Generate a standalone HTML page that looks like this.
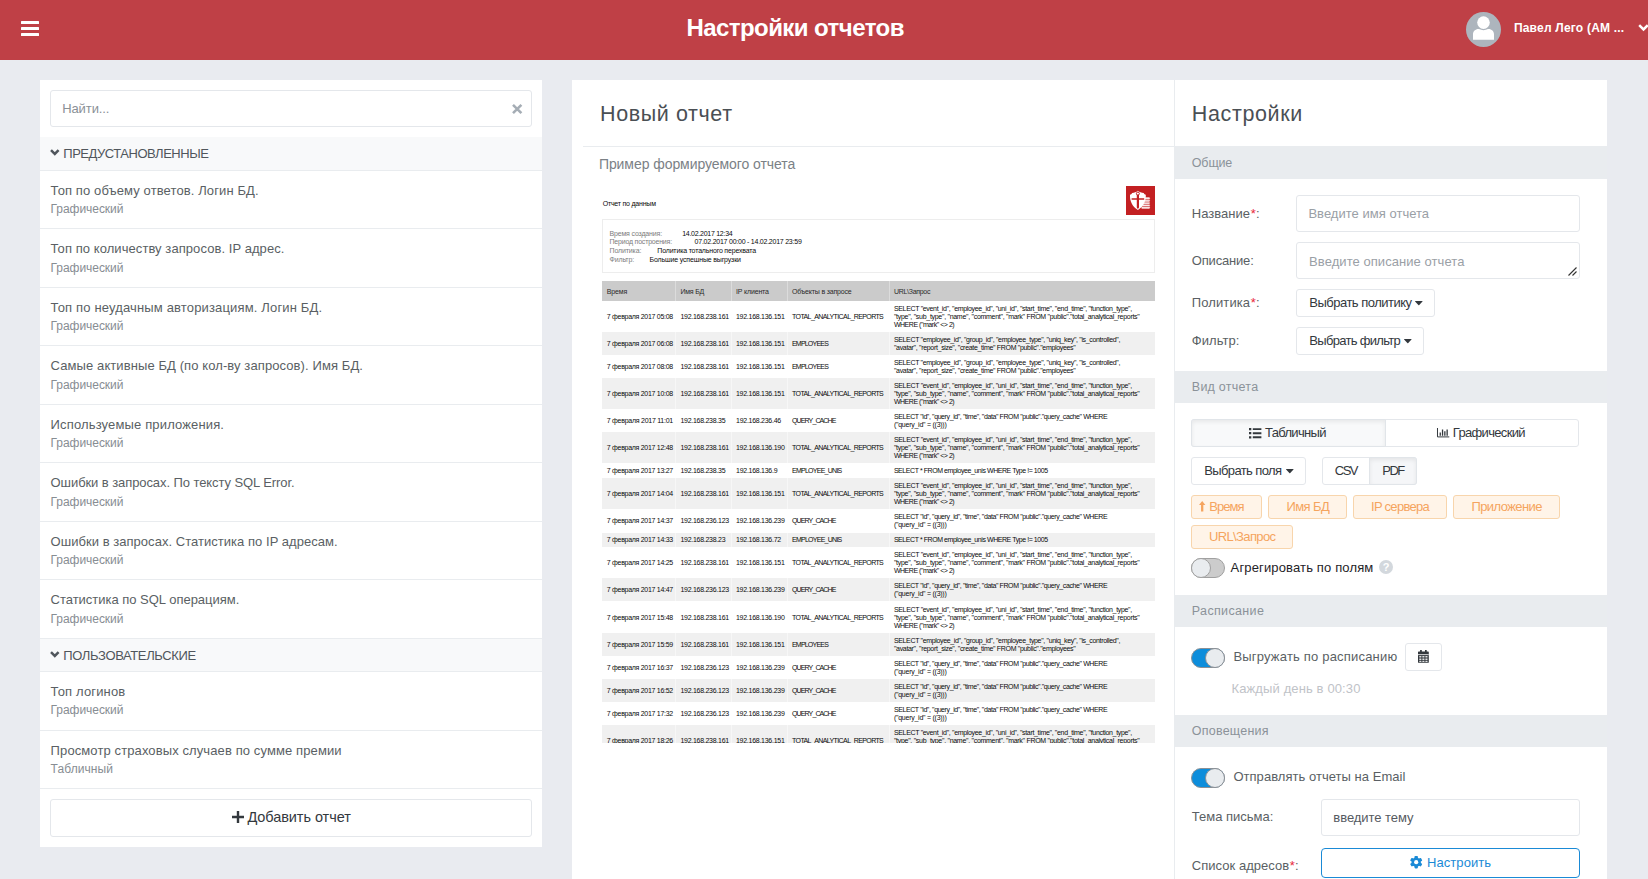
<!DOCTYPE html>
<html lang="ru"><head><meta charset="utf-8"><title>Настройки отчетов</title>
<style>
html,body{margin:0;padding:0}
body{width:1648px;height:879px;overflow:hidden;background:#e9ebf0;position:relative;font-family:"Liberation Sans", sans-serif;}
.t{position:absolute;white-space:nowrap;display:block}
.r{position:absolute;box-sizing:border-box}
svg{position:absolute;overflow:visible}

.hd{position:absolute;left:0;top:0;width:1648px;height:60px;background:#bf4046}
.card{position:absolute;background:#fff}
.inp{position:absolute;box-sizing:border-box;background:#fff;border:1px solid #e4e7eb;border-radius:3px}
.tag{position:absolute;box-sizing:border-box;background:#fff4e8;border:1px solid #f8d5ac;border-radius:3px}

</style></head>
<body>
<div class="hd"></div>
<div class="r" style="left:21.00px;top:21.00px;width:18.00px;height:3.00px;background:#fff;border-radius:0.5px;"></div>
<div class="r" style="left:21.00px;top:27.00px;width:18.00px;height:3.00px;background:#fff;border-radius:0.5px;"></div>
<div class="r" style="left:21.00px;top:33.00px;width:18.00px;height:3.00px;background:#fff;border-radius:0.5px;"></div>
<span class="t" style="left:686.40px;top:11.02px;font-size:24px;line-height:34px;color:#fff;font-weight:700;letter-spacing:-0.558px;">Настройки отчетов</span>
<svg style="left:1466px;top:12px" width="35" height="35" viewBox="0 0 35 35"><circle cx="17.5" cy="17.5" r="17.5" fill="#adb5bd"/><circle cx="17.5" cy="10.6" r="6.3" fill="#fff"/><path d="M7 27.8v-5.3c0-3 2.4-5.4 5.4-5.4h.6c1.4.7 2.9 1.1 4.5 1.1s3.100-.4 4.500-1.100h.6c3 0 5.400 2.400 5.400 5.400v5.300z" fill="#fff"/></svg>
<span class="t" style="left:1513.90px;top:20.01px;font-size:12px;line-height:17px;color:#fff;font-weight:700;letter-spacing:0.209px;">Павел Лего (АМ ...</span>
<svg style="left:1638.3px;top:23.600px" width="11" height="7" viewBox="0 0 11 7"><path d="M1.200 1.200l4.300 4.200 4.300-4.200" fill="none" stroke="#fff" stroke-width="2.500"/></svg>
<div class="card" style="left:40px;top:80px;width:502px;height:767px"></div>
<div class="inp" style="left:50px;top:90px;width:482px;height:37px"></div>
<span class="t" style="left:62.20px;top:100.00px;font-size:13px;line-height:18px;color:#8a9096;letter-spacing:-0.091px;">Найти...</span>
<svg style="left:511.6px;top:103.900px" width="10.4" height="10" viewBox="0 0 10.400 10"><path d="M1 0.900l8.400 8.200M9.400 0.900l-8.400 8.200" stroke="#a5adb5" stroke-width="2.600" fill="none"/></svg>
<div class="r" style="left:40.00px;top:137.00px;width:502.00px;height:33.10px;background:#f8f9fa;"></div>
<div class="r" style="left:40.00px;top:169.60px;width:502.00px;height:1.00px;background:#e9ecef;"></div>
<svg style="left:49.800px;top:149.0px" width="9.6" height="7.2" viewBox="0 0 9.600 7.200"><path d="M1 1.200l3.800 3.800 3.800-3.800" fill="none" stroke="#50565c" stroke-width="2.5"/></svg>
<span class="t" style="left:63.30px;top:145.00px;font-size:13px;line-height:18px;color:#50565c;letter-spacing:-0.476px;">ПРЕДУСТАНОВЛЕННЫЕ</span>
<span class="t" style="left:50.60px;top:182.00px;font-size:13px;line-height:18px;color:#5a5f64;letter-spacing:0.109px;">Топ по объему ответов. Логин БД.</span>
<span class="t" style="left:50.60px;top:201.00px;font-size:12px;line-height:17px;color:#878d93;letter-spacing:-0.054px;">Графический</span>
<div class="r" style="left:40.00px;top:228.15px;width:502.00px;height:1.00px;background:#e9ecef;"></div>
<span class="t" style="left:50.60px;top:240.00px;font-size:13px;line-height:18px;color:#5a5f64;letter-spacing:0.071px;">Топ по количеству запросов. IP адрес.</span>
<span class="t" style="left:50.60px;top:260.01px;font-size:12px;line-height:17px;color:#878d93;letter-spacing:-0.054px;">Графический</span>
<div class="r" style="left:40.00px;top:286.70px;width:502.00px;height:1.00px;background:#e9ecef;"></div>
<span class="t" style="left:50.60px;top:299.00px;font-size:13px;line-height:18px;color:#5a5f64;letter-spacing:0.157px;">Топ по неудачным авторизациям. Логин БД.</span>
<span class="t" style="left:50.60px;top:318.01px;font-size:12px;line-height:17px;color:#878d93;letter-spacing:-0.054px;">Графический</span>
<div class="r" style="left:40.00px;top:345.25px;width:502.00px;height:1.00px;background:#e9ecef;"></div>
<span class="t" style="left:50.60px;top:357.01px;font-size:13px;line-height:18px;color:#5a5f64;letter-spacing:0.095px;">Самые активные БД (по кол-ву запросов). Имя БД.</span>
<span class="t" style="left:50.60px;top:377.01px;font-size:12px;line-height:17px;color:#878d93;letter-spacing:-0.054px;">Графический</span>
<div class="r" style="left:40.00px;top:403.80px;width:502.00px;height:1.00px;background:#e9ecef;"></div>
<span class="t" style="left:50.60px;top:416.00px;font-size:13px;line-height:18px;color:#5a5f64;letter-spacing:0.144px;">Используемые приложения.</span>
<span class="t" style="left:50.60px;top:435.02px;font-size:12px;line-height:17px;color:#878d93;letter-spacing:-0.054px;">Графический</span>
<div class="r" style="left:40.00px;top:462.35px;width:502.00px;height:1.00px;background:#e9ecef;"></div>
<span class="t" style="left:50.60px;top:474.00px;font-size:13px;line-height:18px;color:#5a5f64;letter-spacing:-0.083px;">Ошибки в запросах. По тексту SQL Error.</span>
<span class="t" style="left:50.60px;top:494.00px;font-size:12px;line-height:17px;color:#878d93;letter-spacing:-0.054px;">Графический</span>
<div class="r" style="left:40.00px;top:520.90px;width:502.00px;height:1.00px;background:#e9ecef;"></div>
<span class="t" style="left:50.60px;top:533.00px;font-size:13px;line-height:18px;color:#5a5f64;letter-spacing:0.036px;">Ошибки в запросах. Статистика по IP адресам.</span>
<span class="t" style="left:50.60px;top:552.01px;font-size:12px;line-height:17px;color:#878d93;letter-spacing:-0.054px;">Графический</span>
<div class="r" style="left:40.00px;top:579.45px;width:502.00px;height:1.00px;background:#e9ecef;"></div>
<span class="t" style="left:50.60px;top:591.00px;font-size:13px;line-height:18px;color:#5a5f64;letter-spacing:-0.017px;">Статистика по SQL операциям.</span>
<span class="t" style="left:50.60px;top:611.01px;font-size:12px;line-height:17px;color:#878d93;letter-spacing:-0.054px;">Графический</span>
<div class="r" style="left:40.00px;top:638.00px;width:502.00px;height:1.00px;background:#e9ecef;"></div>
<div class="r" style="left:40.00px;top:639.00px;width:502.00px;height:32.60px;background:#f8f9fa;"></div>
<div class="r" style="left:40.00px;top:671.10px;width:502.00px;height:1.00px;background:#e9ecef;"></div>
<svg style="left:49.800px;top:650.8px" width="9.6" height="7.2" viewBox="0 0 9.600 7.200"><path d="M1 1.200l3.800 3.800 3.800-3.800" fill="none" stroke="#50565c" stroke-width="2.5"/></svg>
<span class="t" style="left:63.30px;top:647.01px;font-size:13px;line-height:18px;color:#50565c;letter-spacing:-0.367px;">ПОЛЬЗОВАТЕЛЬСКИЕ</span>
<span class="t" style="left:50.60px;top:683.00px;font-size:13px;line-height:18px;color:#5a5f64;letter-spacing:0.151px;">Топ логинов</span>
<span class="t" style="left:50.60px;top:702.01px;font-size:12px;line-height:17px;color:#878d93;letter-spacing:-0.054px;">Графический</span>
<div class="r" style="left:40.00px;top:729.80px;width:502.00px;height:1.00px;background:#e9ecef;"></div>
<span class="t" style="left:50.60px;top:742.00px;font-size:13px;line-height:18px;color:#5a5f64;letter-spacing:0.107px;">Просмотр страховых случаев по сумме премии</span>
<span class="t" style="left:50.60px;top:761.01px;font-size:12px;line-height:17px;color:#878d93;letter-spacing:0.085px;">Табличный</span>
<div class="r" style="left:40.00px;top:788.10px;width:502.00px;height:1.00px;background:#e9ecef;"></div>
<div class="inp" style="left:50px;top:799px;width:482px;height:38px"></div>
<svg style="left:231.5px;top:811.3px" width="12" height="12" viewBox="0 0 12 12"><path d="M6 0v12M0 6h12" stroke="#33383d" stroke-width="2.4" fill="none"/></svg>
<span class="t" style="left:247.40px;top:807.01px;font-size:14.5px;line-height:20px;color:#33383d;letter-spacing:-0.068px;">Добавить отчет</span>
<div class="card" style="left:572px;top:80px;width:602.5px;height:799px"></div>
<span class="t" style="left:600.00px;top:99.01px;font-size:21.5px;line-height:30px;color:#4a4f54;letter-spacing:0.603px;">Новый отчет</span>
<div class="r" style="left:583.00px;top:146.00px;width:591.50px;height:1.00px;background:#e9ecef;"></div>
<span class="t" style="left:598.90px;top:154.00px;font-size:14px;line-height:20px;color:#7b8186;letter-spacing:-0.063px;">Пример формируемого отчета</span>
<span class="t" style="left:602.70px;top:199.01px;font-size:7px;line-height:10px;color:#0a0a0a;letter-spacing:-0.214px;">Отчет по данным</span>
<div class="r" style="left:1126.00px;top:186.00px;width:29.00px;height:29.00px;background:#c32022;"></div>
<svg style="left:1126px;top:186px" width="29" height="29" viewBox="0 0 29 29"><g fill="#fbeaea" stroke="#c32022" stroke-width="0.500"><rect x="15.200" y="20.300" width="8.900" height="2.600" rx="1.200"/><rect x="16" y="18" width="8.100" height="2.600" rx="1.200"/><rect x="16.800" y="15.700" width="7.300" height="2.600" rx="1.200"/><rect x="17.600" y="13.400" width="6.500" height="2.600" rx="1.200"/><rect x="18.400" y="11.100" width="5.700" height="2.600" rx="1.200"/></g><path d="M11.900 4.800c1.600 1.300 3.600 2.100 5.800 2.300c.5 1 1.200 1.500 2.100 1.700c.3 6.200-2 11.600-7.900 15.100c-5.900-3.500-8.200-8.900-7.900-15.100c.9-.2 1.600-.7 2.100-1.700c2.200-.2 4.200-1 5.800-2.300z" fill="#fff"/><path d="M10.800 8.200h2.200v13.200l-1.100 1.500l-1.100-1.500zM5.600 12.200h12.600v1.600h-12.600z" fill="#c32022"/><circle cx="11.900" cy="7.600" r="1.500" fill="#fff" stroke="#c32022" stroke-width="1"/></svg>
<div class="r" style="left:602.00px;top:219.20px;width:553.00px;height:53.50px;border:1px solid #ededed;"></div>
<span class="t" style="left:609.50px;top:229.02px;font-size:7px;line-height:10px;color:#7c7c7c;letter-spacing:-0.168px;">Время создания:</span>
<span class="t" style="left:682.20px;top:229.02px;font-size:7px;line-height:10px;color:#0a0a0a;letter-spacing:-0.267px;">14.02.2017 12:34</span>
<span class="t" style="left:609.50px;top:237.01px;font-size:7px;line-height:10px;color:#7c7c7c;letter-spacing:-0.205px;">Период построения:</span>
<span class="t" style="left:694.60px;top:237.01px;font-size:7px;line-height:10px;color:#0a0a0a;letter-spacing:-0.236px;">07.02.2017 00:00 - 14.02.2017 23:59</span>
<span class="t" style="left:609.50px;top:246.01px;font-size:7px;line-height:10px;color:#7c7c7c;letter-spacing:-0.130px;">Политика:</span>
<span class="t" style="left:657.30px;top:246.01px;font-size:7px;line-height:10px;color:#0a0a0a;letter-spacing:-0.174px;">Политика тотального перехвата</span>
<span class="t" style="left:609.50px;top:255.01px;font-size:7px;line-height:10px;color:#7c7c7c;letter-spacing:-0.145px;">Фильтр:</span>
<span class="t" style="left:649.60px;top:255.01px;font-size:7px;line-height:10px;color:#0a0a0a;letter-spacing:-0.158px;">Большие успешные выгрузки</span>
<div class="r" style="left:602.00px;top:281.30px;width:553.00px;height:19.40px;background:#cbcbcb;"></div>
<div class="r" style="left:675.20px;top:281.30px;width:0.80px;height:19.40px;background:#dcdcdc;"></div>
<div class="r" style="left:731.20px;top:281.30px;width:0.80px;height:19.40px;background:#dcdcdc;"></div>
<div class="r" style="left:786.90px;top:281.30px;width:0.80px;height:19.40px;background:#dcdcdc;"></div>
<div class="r" style="left:889.00px;top:281.30px;width:0.80px;height:19.40px;background:#dcdcdc;"></div>
<span class="t" style="left:606.80px;top:287.02px;font-size:7px;line-height:10px;color:#2a2a2a;letter-spacing:-0.166px;">Время</span>
<span class="t" style="left:680.40px;top:287.02px;font-size:7px;line-height:10px;color:#2a2a2a;letter-spacing:-0.204px;">Имя БД</span>
<span class="t" style="left:736.00px;top:287.02px;font-size:7px;line-height:10px;color:#2a2a2a;letter-spacing:-0.151px;">IP клиента</span>
<span class="t" style="left:792.00px;top:287.02px;font-size:7px;line-height:10px;color:#2a2a2a;letter-spacing:-0.179px;">Объекты в запросе</span>
<span class="t" style="left:893.90px;top:287.02px;font-size:7px;line-height:10px;color:#2a2a2a;letter-spacing:-0.284px;">URL\Запрос</span>
<div style="position:absolute;left:0;top:0;width:1648px;height:743px;overflow:hidden">
<span class="t" style="left:606.80px;top:312.01px;font-size:7px;line-height:10px;color:#0a0a0a;letter-spacing:-0.287px;">7 февраля 2017 05:08</span>
<span class="t" style="left:680.40px;top:312.01px;font-size:7px;line-height:10px;color:#0a0a0a;letter-spacing:-0.269px;">192.168.238.161</span>
<span class="t" style="left:736.00px;top:312.01px;font-size:7px;line-height:10px;color:#0a0a0a;letter-spacing:-0.269px;">192.168.136.151</span>
<span class="t" style="left:792.00px;top:312.01px;font-size:7px;line-height:10px;color:#0a0a0a;letter-spacing:-0.604px;">TOTAL_ANALYTICAL_REPORTS</span>
<span class="t" style="left:893.90px;top:304.01px;font-size:7px;line-height:10px;color:#0a0a0a;letter-spacing:-0.329px;">SELECT &quot;event_id&quot;, &quot;employee_id&quot;, &quot;uni_id&quot;, &quot;start_time&quot;, &quot;end_time&quot;, &quot;function_type&quot;,</span>
<span class="t" style="left:893.90px;top:312.01px;font-size:7px;line-height:10px;color:#0a0a0a;letter-spacing:-0.290px;">&quot;type&quot;, &quot;sub_type&quot;, &quot;name&quot;, &quot;comment&quot;, &quot;mark&quot; FROM &quot;public&quot;.&quot;total_analytical_reports&quot;</span>
<span class="t" style="left:893.90px;top:320.01px;font-size:7px;line-height:10px;color:#0a0a0a;letter-spacing:-0.464px;">WHERE (&quot;mark&quot; &lt;&gt; 2)</span>
<div class="r" style="left:602.00px;top:331.50px;width:553.00px;height:23.20px;background:#f0f0f0;"></div>
<div class="r" style="left:675.20px;top:331.50px;width:0.80px;height:23.20px;background:#f7f7f7;"></div>
<div class="r" style="left:731.20px;top:331.50px;width:0.80px;height:23.20px;background:#f7f7f7;"></div>
<div class="r" style="left:786.90px;top:331.50px;width:0.80px;height:23.20px;background:#f7f7f7;"></div>
<div class="r" style="left:889.00px;top:331.50px;width:0.80px;height:23.20px;background:#f7f7f7;"></div>
<span class="t" style="left:606.80px;top:339.01px;font-size:7px;line-height:10px;color:#0a0a0a;letter-spacing:-0.287px;">7 февраля 2017 06:08</span>
<span class="t" style="left:680.40px;top:339.01px;font-size:7px;line-height:10px;color:#0a0a0a;letter-spacing:-0.269px;">192.168.238.161</span>
<span class="t" style="left:736.00px;top:339.01px;font-size:7px;line-height:10px;color:#0a0a0a;letter-spacing:-0.269px;">192.168.136.151</span>
<span class="t" style="left:792.00px;top:339.01px;font-size:7px;line-height:10px;color:#0a0a0a;letter-spacing:-0.798px;">EMPLOYEES</span>
<span class="t" style="left:893.90px;top:335.01px;font-size:7px;line-height:10px;color:#0a0a0a;letter-spacing:-0.342px;">SELECT &quot;employee_id&quot;, &quot;group_id&quot;, &quot;employee_type&quot;, &quot;uniq_key&quot;, &quot;is_controlled&quot;,</span>
<span class="t" style="left:893.90px;top:343.01px;font-size:7px;line-height:10px;color:#0a0a0a;letter-spacing:-0.317px;">&quot;avatar&quot;, &quot;report_size&quot;, &quot;create_time&quot; FROM &quot;public&quot;.&quot;employees&quot;</span>
<span class="t" style="left:606.80px;top:362.02px;font-size:7px;line-height:10px;color:#0a0a0a;letter-spacing:-0.287px;">7 февраля 2017 08:08</span>
<span class="t" style="left:680.40px;top:362.02px;font-size:7px;line-height:10px;color:#0a0a0a;letter-spacing:-0.269px;">192.168.238.161</span>
<span class="t" style="left:736.00px;top:362.02px;font-size:7px;line-height:10px;color:#0a0a0a;letter-spacing:-0.269px;">192.168.136.151</span>
<span class="t" style="left:792.00px;top:362.02px;font-size:7px;line-height:10px;color:#0a0a0a;letter-spacing:-0.798px;">EMPLOYEES</span>
<span class="t" style="left:893.90px;top:358.01px;font-size:7px;line-height:10px;color:#0a0a0a;letter-spacing:-0.342px;">SELECT &quot;employee_id&quot;, &quot;group_id&quot;, &quot;employee_type&quot;, &quot;uniq_key&quot;, &quot;is_controlled&quot;,</span>
<span class="t" style="left:893.90px;top:366.01px;font-size:7px;line-height:10px;color:#0a0a0a;letter-spacing:-0.317px;">&quot;avatar&quot;, &quot;report_size&quot;, &quot;create_time&quot; FROM &quot;public&quot;.&quot;employees&quot;</span>
<div class="r" style="left:602.00px;top:377.90px;width:553.00px;height:30.70px;background:#f0f0f0;"></div>
<div class="r" style="left:675.20px;top:377.90px;width:0.80px;height:30.70px;background:#f7f7f7;"></div>
<div class="r" style="left:731.20px;top:377.90px;width:0.80px;height:30.70px;background:#f7f7f7;"></div>
<div class="r" style="left:786.90px;top:377.90px;width:0.80px;height:30.70px;background:#f7f7f7;"></div>
<div class="r" style="left:889.00px;top:377.90px;width:0.80px;height:30.70px;background:#f7f7f7;"></div>
<span class="t" style="left:606.80px;top:389.02px;font-size:7px;line-height:10px;color:#0a0a0a;letter-spacing:-0.287px;">7 февраля 2017 10:08</span>
<span class="t" style="left:680.40px;top:389.02px;font-size:7px;line-height:10px;color:#0a0a0a;letter-spacing:-0.269px;">192.168.238.161</span>
<span class="t" style="left:736.00px;top:389.02px;font-size:7px;line-height:10px;color:#0a0a0a;letter-spacing:-0.269px;">192.168.136.151</span>
<span class="t" style="left:792.00px;top:389.02px;font-size:7px;line-height:10px;color:#0a0a0a;letter-spacing:-0.604px;">TOTAL_ANALYTICAL_REPORTS</span>
<span class="t" style="left:893.90px;top:381.01px;font-size:7px;line-height:10px;color:#0a0a0a;letter-spacing:-0.329px;">SELECT &quot;event_id&quot;, &quot;employee_id&quot;, &quot;uni_id&quot;, &quot;start_time&quot;, &quot;end_time&quot;, &quot;function_type&quot;,</span>
<span class="t" style="left:893.90px;top:389.01px;font-size:7px;line-height:10px;color:#0a0a0a;letter-spacing:-0.290px;">&quot;type&quot;, &quot;sub_type&quot;, &quot;name&quot;, &quot;comment&quot;, &quot;mark&quot; FROM &quot;public&quot;.&quot;total_analytical_reports&quot;</span>
<span class="t" style="left:893.90px;top:397.01px;font-size:7px;line-height:10px;color:#0a0a0a;letter-spacing:-0.464px;">WHERE (&quot;mark&quot; &lt;&gt; 2)</span>
<span class="t" style="left:606.80px;top:416.01px;font-size:7px;line-height:10px;color:#0a0a0a;letter-spacing:-0.260px;">7 февраля 2017 11:01</span>
<span class="t" style="left:680.40px;top:416.01px;font-size:7px;line-height:10px;color:#0a0a0a;letter-spacing:-0.268px;">192.168.238.35</span>
<span class="t" style="left:736.00px;top:416.01px;font-size:7px;line-height:10px;color:#0a0a0a;letter-spacing:-0.268px;">192.168.236.46</span>
<span class="t" style="left:792.00px;top:416.01px;font-size:7px;line-height:10px;color:#0a0a0a;letter-spacing:-0.877px;">QUERY_CACHE</span>
<span class="t" style="left:893.90px;top:412.01px;font-size:7px;line-height:10px;color:#0a0a0a;letter-spacing:-0.400px;">SELECT &quot;id&quot;, &quot;query_id&quot;, &quot;time&quot;, &quot;data&quot; FROM &quot;public&quot;.&quot;query_cache&quot; WHERE</span>
<span class="t" style="left:893.90px;top:420.01px;font-size:7px;line-height:10px;color:#0a0a0a;letter-spacing:-0.252px;">(&quot;query_id&quot; = ((3)))</span>
<div class="r" style="left:602.00px;top:431.80px;width:553.00px;height:31.50px;background:#f0f0f0;"></div>
<div class="r" style="left:675.20px;top:431.80px;width:0.80px;height:31.50px;background:#f7f7f7;"></div>
<div class="r" style="left:731.20px;top:431.80px;width:0.80px;height:31.50px;background:#f7f7f7;"></div>
<div class="r" style="left:786.90px;top:431.80px;width:0.80px;height:31.50px;background:#f7f7f7;"></div>
<div class="r" style="left:889.00px;top:431.80px;width:0.80px;height:31.50px;background:#f7f7f7;"></div>
<span class="t" style="left:606.80px;top:443.02px;font-size:7px;line-height:10px;color:#0a0a0a;letter-spacing:-0.287px;">7 февраля 2017 12:48</span>
<span class="t" style="left:680.40px;top:443.02px;font-size:7px;line-height:10px;color:#0a0a0a;letter-spacing:-0.269px;">192.168.238.161</span>
<span class="t" style="left:736.00px;top:443.02px;font-size:7px;line-height:10px;color:#0a0a0a;letter-spacing:-0.269px;">192.168.136.190</span>
<span class="t" style="left:792.00px;top:443.02px;font-size:7px;line-height:10px;color:#0a0a0a;letter-spacing:-0.604px;">TOTAL_ANALYTICAL_REPORTS</span>
<span class="t" style="left:893.90px;top:435.01px;font-size:7px;line-height:10px;color:#0a0a0a;letter-spacing:-0.329px;">SELECT &quot;event_id&quot;, &quot;employee_id&quot;, &quot;uni_id&quot;, &quot;start_time&quot;, &quot;end_time&quot;, &quot;function_type&quot;,</span>
<span class="t" style="left:893.90px;top:443.01px;font-size:7px;line-height:10px;color:#0a0a0a;letter-spacing:-0.290px;">&quot;type&quot;, &quot;sub_type&quot;, &quot;name&quot;, &quot;comment&quot;, &quot;mark&quot; FROM &quot;public&quot;.&quot;total_analytical_reports&quot;</span>
<span class="t" style="left:893.90px;top:451.01px;font-size:7px;line-height:10px;color:#0a0a0a;letter-spacing:-0.464px;">WHERE (&quot;mark&quot; &lt;&gt; 2)</span>
<span class="t" style="left:606.80px;top:466.02px;font-size:7px;line-height:10px;color:#0a0a0a;letter-spacing:-0.287px;">7 февраля 2017 13:27</span>
<span class="t" style="left:680.40px;top:466.02px;font-size:7px;line-height:10px;color:#0a0a0a;letter-spacing:-0.268px;">192.168.238.35</span>
<span class="t" style="left:736.00px;top:466.02px;font-size:7px;line-height:10px;color:#0a0a0a;letter-spacing:-0.266px;">192.168.136.9</span>
<span class="t" style="left:792.00px;top:466.02px;font-size:7px;line-height:10px;color:#0a0a0a;letter-spacing:-0.737px;">EMPLOYEE_UNIS</span>
<span class="t" style="left:893.90px;top:466.01px;font-size:7px;line-height:10px;color:#0a0a0a;letter-spacing:-0.437px;">SELECT * FROM employee_unis WHERE Type != 1005</span>
<div class="r" style="left:602.00px;top:478.20px;width:553.00px;height:31.10px;background:#f0f0f0;"></div>
<div class="r" style="left:675.20px;top:478.20px;width:0.80px;height:31.10px;background:#f7f7f7;"></div>
<div class="r" style="left:731.20px;top:478.20px;width:0.80px;height:31.10px;background:#f7f7f7;"></div>
<div class="r" style="left:786.90px;top:478.20px;width:0.80px;height:31.10px;background:#f7f7f7;"></div>
<div class="r" style="left:889.00px;top:478.20px;width:0.80px;height:31.10px;background:#f7f7f7;"></div>
<span class="t" style="left:606.80px;top:489.02px;font-size:7px;line-height:10px;color:#0a0a0a;letter-spacing:-0.287px;">7 февраля 2017 14:04</span>
<span class="t" style="left:680.40px;top:489.02px;font-size:7px;line-height:10px;color:#0a0a0a;letter-spacing:-0.269px;">192.168.238.161</span>
<span class="t" style="left:736.00px;top:489.02px;font-size:7px;line-height:10px;color:#0a0a0a;letter-spacing:-0.269px;">192.168.136.151</span>
<span class="t" style="left:792.00px;top:489.02px;font-size:7px;line-height:10px;color:#0a0a0a;letter-spacing:-0.604px;">TOTAL_ANALYTICAL_REPORTS</span>
<span class="t" style="left:893.90px;top:481.01px;font-size:7px;line-height:10px;color:#0a0a0a;letter-spacing:-0.329px;">SELECT &quot;event_id&quot;, &quot;employee_id&quot;, &quot;uni_id&quot;, &quot;start_time&quot;, &quot;end_time&quot;, &quot;function_type&quot;,</span>
<span class="t" style="left:893.90px;top:489.01px;font-size:7px;line-height:10px;color:#0a0a0a;letter-spacing:-0.290px;">&quot;type&quot;, &quot;sub_type&quot;, &quot;name&quot;, &quot;comment&quot;, &quot;mark&quot; FROM &quot;public&quot;.&quot;total_analytical_reports&quot;</span>
<span class="t" style="left:893.90px;top:497.01px;font-size:7px;line-height:10px;color:#0a0a0a;letter-spacing:-0.464px;">WHERE (&quot;mark&quot; &lt;&gt; 2)</span>
<span class="t" style="left:606.80px;top:516.01px;font-size:7px;line-height:10px;color:#0a0a0a;letter-spacing:-0.287px;">7 февраля 2017 14:37</span>
<span class="t" style="left:680.40px;top:516.01px;font-size:7px;line-height:10px;color:#0a0a0a;letter-spacing:-0.269px;">192.168.236.123</span>
<span class="t" style="left:736.00px;top:516.01px;font-size:7px;line-height:10px;color:#0a0a0a;letter-spacing:-0.269px;">192.168.136.239</span>
<span class="t" style="left:792.00px;top:516.01px;font-size:7px;line-height:10px;color:#0a0a0a;letter-spacing:-0.877px;">QUERY_CACHE</span>
<span class="t" style="left:893.90px;top:512.01px;font-size:7px;line-height:10px;color:#0a0a0a;letter-spacing:-0.400px;">SELECT &quot;id&quot;, &quot;query_id&quot;, &quot;time&quot;, &quot;data&quot; FROM &quot;public&quot;.&quot;query_cache&quot; WHERE</span>
<span class="t" style="left:893.90px;top:520.01px;font-size:7px;line-height:10px;color:#0a0a0a;letter-spacing:-0.252px;">(&quot;query_id&quot; = ((3)))</span>
<div class="r" style="left:602.00px;top:532.50px;width:553.00px;height:14.50px;background:#f0f0f0;"></div>
<div class="r" style="left:675.20px;top:532.50px;width:0.80px;height:14.50px;background:#f7f7f7;"></div>
<div class="r" style="left:731.20px;top:532.50px;width:0.80px;height:14.50px;background:#f7f7f7;"></div>
<div class="r" style="left:786.90px;top:532.50px;width:0.80px;height:14.50px;background:#f7f7f7;"></div>
<div class="r" style="left:889.00px;top:532.50px;width:0.80px;height:14.50px;background:#f7f7f7;"></div>
<span class="t" style="left:606.80px;top:535.02px;font-size:7px;line-height:10px;color:#0a0a0a;letter-spacing:-0.287px;">7 февраля 2017 14:33</span>
<span class="t" style="left:680.40px;top:535.02px;font-size:7px;line-height:10px;color:#0a0a0a;letter-spacing:-0.268px;">192.168.238.23</span>
<span class="t" style="left:736.00px;top:535.02px;font-size:7px;line-height:10px;color:#0a0a0a;letter-spacing:-0.268px;">192.168.136.72</span>
<span class="t" style="left:792.00px;top:535.02px;font-size:7px;line-height:10px;color:#0a0a0a;letter-spacing:-0.737px;">EMPLOYEE_UNIS</span>
<span class="t" style="left:893.90px;top:535.01px;font-size:7px;line-height:10px;color:#0a0a0a;letter-spacing:-0.437px;">SELECT * FROM employee_unis WHERE Type != 1005</span>
<span class="t" style="left:606.80px;top:558.02px;font-size:7px;line-height:10px;color:#0a0a0a;letter-spacing:-0.287px;">7 февраля 2017 14:25</span>
<span class="t" style="left:680.40px;top:558.02px;font-size:7px;line-height:10px;color:#0a0a0a;letter-spacing:-0.269px;">192.168.238.161</span>
<span class="t" style="left:736.00px;top:558.02px;font-size:7px;line-height:10px;color:#0a0a0a;letter-spacing:-0.269px;">192.168.136.151</span>
<span class="t" style="left:792.00px;top:558.02px;font-size:7px;line-height:10px;color:#0a0a0a;letter-spacing:-0.604px;">TOTAL_ANALYTICAL_REPORTS</span>
<span class="t" style="left:893.90px;top:550.01px;font-size:7px;line-height:10px;color:#0a0a0a;letter-spacing:-0.329px;">SELECT &quot;event_id&quot;, &quot;employee_id&quot;, &quot;uni_id&quot;, &quot;start_time&quot;, &quot;end_time&quot;, &quot;function_type&quot;,</span>
<span class="t" style="left:893.90px;top:558.01px;font-size:7px;line-height:10px;color:#0a0a0a;letter-spacing:-0.290px;">&quot;type&quot;, &quot;sub_type&quot;, &quot;name&quot;, &quot;comment&quot;, &quot;mark&quot; FROM &quot;public&quot;.&quot;total_analytical_reports&quot;</span>
<span class="t" style="left:893.90px;top:566.01px;font-size:7px;line-height:10px;color:#0a0a0a;letter-spacing:-0.464px;">WHERE (&quot;mark&quot; &lt;&gt; 2)</span>
<div class="r" style="left:602.00px;top:578.00px;width:553.00px;height:23.30px;background:#f0f0f0;"></div>
<div class="r" style="left:675.20px;top:578.00px;width:0.80px;height:23.30px;background:#f7f7f7;"></div>
<div class="r" style="left:731.20px;top:578.00px;width:0.80px;height:23.30px;background:#f7f7f7;"></div>
<div class="r" style="left:786.90px;top:578.00px;width:0.80px;height:23.30px;background:#f7f7f7;"></div>
<div class="r" style="left:889.00px;top:578.00px;width:0.80px;height:23.30px;background:#f7f7f7;"></div>
<span class="t" style="left:606.80px;top:585.01px;font-size:7px;line-height:10px;color:#0a0a0a;letter-spacing:-0.287px;">7 февраля 2017 14:47</span>
<span class="t" style="left:680.40px;top:585.01px;font-size:7px;line-height:10px;color:#0a0a0a;letter-spacing:-0.269px;">192.168.236.123</span>
<span class="t" style="left:736.00px;top:585.01px;font-size:7px;line-height:10px;color:#0a0a0a;letter-spacing:-0.269px;">192.168.136.239</span>
<span class="t" style="left:792.00px;top:585.01px;font-size:7px;line-height:10px;color:#0a0a0a;letter-spacing:-0.877px;">QUERY_CACHE</span>
<span class="t" style="left:893.90px;top:581.01px;font-size:7px;line-height:10px;color:#0a0a0a;letter-spacing:-0.400px;">SELECT &quot;id&quot;, &quot;query_id&quot;, &quot;time&quot;, &quot;data&quot; FROM &quot;public&quot;.&quot;query_cache&quot; WHERE</span>
<span class="t" style="left:893.90px;top:589.01px;font-size:7px;line-height:10px;color:#0a0a0a;letter-spacing:-0.252px;">(&quot;query_id&quot; = ((3)))</span>
<span class="t" style="left:606.80px;top:613.01px;font-size:7px;line-height:10px;color:#0a0a0a;letter-spacing:-0.287px;">7 февраля 2017 15:48</span>
<span class="t" style="left:680.40px;top:613.01px;font-size:7px;line-height:10px;color:#0a0a0a;letter-spacing:-0.269px;">192.168.238.161</span>
<span class="t" style="left:736.00px;top:613.01px;font-size:7px;line-height:10px;color:#0a0a0a;letter-spacing:-0.269px;">192.168.136.190</span>
<span class="t" style="left:792.00px;top:613.01px;font-size:7px;line-height:10px;color:#0a0a0a;letter-spacing:-0.604px;">TOTAL_ANALYTICAL_REPORTS</span>
<span class="t" style="left:893.90px;top:605.01px;font-size:7px;line-height:10px;color:#0a0a0a;letter-spacing:-0.329px;">SELECT &quot;event_id&quot;, &quot;employee_id&quot;, &quot;uni_id&quot;, &quot;start_time&quot;, &quot;end_time&quot;, &quot;function_type&quot;,</span>
<span class="t" style="left:893.90px;top:613.01px;font-size:7px;line-height:10px;color:#0a0a0a;letter-spacing:-0.290px;">&quot;type&quot;, &quot;sub_type&quot;, &quot;name&quot;, &quot;comment&quot;, &quot;mark&quot; FROM &quot;public&quot;.&quot;total_analytical_reports&quot;</span>
<span class="t" style="left:893.90px;top:621.01px;font-size:7px;line-height:10px;color:#0a0a0a;letter-spacing:-0.464px;">WHERE (&quot;mark&quot; &lt;&gt; 2)</span>
<div class="r" style="left:602.00px;top:632.50px;width:553.00px;height:23.20px;background:#f0f0f0;"></div>
<div class="r" style="left:675.20px;top:632.50px;width:0.80px;height:23.20px;background:#f7f7f7;"></div>
<div class="r" style="left:731.20px;top:632.50px;width:0.80px;height:23.20px;background:#f7f7f7;"></div>
<div class="r" style="left:786.90px;top:632.50px;width:0.80px;height:23.20px;background:#f7f7f7;"></div>
<div class="r" style="left:889.00px;top:632.50px;width:0.80px;height:23.20px;background:#f7f7f7;"></div>
<span class="t" style="left:606.80px;top:640.01px;font-size:7px;line-height:10px;color:#0a0a0a;letter-spacing:-0.287px;">7 февраля 2017 15:59</span>
<span class="t" style="left:680.40px;top:640.01px;font-size:7px;line-height:10px;color:#0a0a0a;letter-spacing:-0.269px;">192.168.238.161</span>
<span class="t" style="left:736.00px;top:640.01px;font-size:7px;line-height:10px;color:#0a0a0a;letter-spacing:-0.269px;">192.168.136.151</span>
<span class="t" style="left:792.00px;top:640.01px;font-size:7px;line-height:10px;color:#0a0a0a;letter-spacing:-0.798px;">EMPLOYEES</span>
<span class="t" style="left:893.90px;top:636.01px;font-size:7px;line-height:10px;color:#0a0a0a;letter-spacing:-0.342px;">SELECT &quot;employee_id&quot;, &quot;group_id&quot;, &quot;employee_type&quot;, &quot;uniq_key&quot;, &quot;is_controlled&quot;,</span>
<span class="t" style="left:893.90px;top:644.01px;font-size:7px;line-height:10px;color:#0a0a0a;letter-spacing:-0.317px;">&quot;avatar&quot;, &quot;report_size&quot;, &quot;create_time&quot; FROM &quot;public&quot;.&quot;employees&quot;</span>
<span class="t" style="left:606.80px;top:663.02px;font-size:7px;line-height:10px;color:#0a0a0a;letter-spacing:-0.287px;">7 февраля 2017 16:37</span>
<span class="t" style="left:680.40px;top:663.02px;font-size:7px;line-height:10px;color:#0a0a0a;letter-spacing:-0.269px;">192.168.236.123</span>
<span class="t" style="left:736.00px;top:663.02px;font-size:7px;line-height:10px;color:#0a0a0a;letter-spacing:-0.269px;">192.168.136.239</span>
<span class="t" style="left:792.00px;top:663.02px;font-size:7px;line-height:10px;color:#0a0a0a;letter-spacing:-0.877px;">QUERY_CACHE</span>
<span class="t" style="left:893.90px;top:659.01px;font-size:7px;line-height:10px;color:#0a0a0a;letter-spacing:-0.400px;">SELECT &quot;id&quot;, &quot;query_id&quot;, &quot;time&quot;, &quot;data&quot; FROM &quot;public&quot;.&quot;query_cache&quot; WHERE</span>
<span class="t" style="left:893.90px;top:667.01px;font-size:7px;line-height:10px;color:#0a0a0a;letter-spacing:-0.252px;">(&quot;query_id&quot; = ((3)))</span>
<div class="r" style="left:602.00px;top:678.90px;width:553.00px;height:22.80px;background:#f0f0f0;"></div>
<div class="r" style="left:675.20px;top:678.90px;width:0.80px;height:22.80px;background:#f7f7f7;"></div>
<div class="r" style="left:731.20px;top:678.90px;width:0.80px;height:22.80px;background:#f7f7f7;"></div>
<div class="r" style="left:786.90px;top:678.90px;width:0.80px;height:22.80px;background:#f7f7f7;"></div>
<div class="r" style="left:889.00px;top:678.90px;width:0.80px;height:22.80px;background:#f7f7f7;"></div>
<span class="t" style="left:606.80px;top:686.02px;font-size:7px;line-height:10px;color:#0a0a0a;letter-spacing:-0.287px;">7 февраля 2017 16:52</span>
<span class="t" style="left:680.40px;top:686.02px;font-size:7px;line-height:10px;color:#0a0a0a;letter-spacing:-0.269px;">192.168.236.123</span>
<span class="t" style="left:736.00px;top:686.02px;font-size:7px;line-height:10px;color:#0a0a0a;letter-spacing:-0.269px;">192.168.136.239</span>
<span class="t" style="left:792.00px;top:686.02px;font-size:7px;line-height:10px;color:#0a0a0a;letter-spacing:-0.877px;">QUERY_CACHE</span>
<span class="t" style="left:893.90px;top:682.01px;font-size:7px;line-height:10px;color:#0a0a0a;letter-spacing:-0.400px;">SELECT &quot;id&quot;, &quot;query_id&quot;, &quot;time&quot;, &quot;data&quot; FROM &quot;public&quot;.&quot;query_cache&quot; WHERE</span>
<span class="t" style="left:893.90px;top:690.01px;font-size:7px;line-height:10px;color:#0a0a0a;letter-spacing:-0.252px;">(&quot;query_id&quot; = ((3)))</span>
<span class="t" style="left:606.80px;top:709.02px;font-size:7px;line-height:10px;color:#0a0a0a;letter-spacing:-0.287px;">7 февраля 2017 17:32</span>
<span class="t" style="left:680.40px;top:709.02px;font-size:7px;line-height:10px;color:#0a0a0a;letter-spacing:-0.269px;">192.168.236.123</span>
<span class="t" style="left:736.00px;top:709.02px;font-size:7px;line-height:10px;color:#0a0a0a;letter-spacing:-0.269px;">192.168.136.239</span>
<span class="t" style="left:792.00px;top:709.02px;font-size:7px;line-height:10px;color:#0a0a0a;letter-spacing:-0.877px;">QUERY_CACHE</span>
<span class="t" style="left:893.90px;top:705.01px;font-size:7px;line-height:10px;color:#0a0a0a;letter-spacing:-0.400px;">SELECT &quot;id&quot;, &quot;query_id&quot;, &quot;time&quot;, &quot;data&quot; FROM &quot;public&quot;.&quot;query_cache&quot; WHERE</span>
<span class="t" style="left:893.90px;top:713.01px;font-size:7px;line-height:10px;color:#0a0a0a;letter-spacing:-0.252px;">(&quot;query_id&quot; = ((3)))</span>
<div class="r" style="left:602.00px;top:724.90px;width:553.00px;height:31.00px;background:#f0f0f0;"></div>
<div class="r" style="left:675.20px;top:724.90px;width:0.80px;height:31.00px;background:#f7f7f7;"></div>
<div class="r" style="left:731.20px;top:724.90px;width:0.80px;height:31.00px;background:#f7f7f7;"></div>
<div class="r" style="left:786.90px;top:724.90px;width:0.80px;height:31.00px;background:#f7f7f7;"></div>
<div class="r" style="left:889.00px;top:724.90px;width:0.80px;height:31.00px;background:#f7f7f7;"></div>
<span class="t" style="left:606.80px;top:736.01px;font-size:7px;line-height:10px;color:#0a0a0a;letter-spacing:-0.287px;">7 февраля 2017 18:26</span>
<span class="t" style="left:680.40px;top:736.01px;font-size:7px;line-height:10px;color:#0a0a0a;letter-spacing:-0.269px;">192.168.238.161</span>
<span class="t" style="left:736.00px;top:736.01px;font-size:7px;line-height:10px;color:#0a0a0a;letter-spacing:-0.269px;">192.168.136.151</span>
<span class="t" style="left:792.00px;top:736.01px;font-size:7px;line-height:10px;color:#0a0a0a;letter-spacing:-0.604px;">TOTAL_ANALYTICAL_REPORTS</span>
<span class="t" style="left:893.90px;top:728.01px;font-size:7px;line-height:10px;color:#0a0a0a;letter-spacing:-0.329px;">SELECT &quot;event_id&quot;, &quot;employee_id&quot;, &quot;uni_id&quot;, &quot;start_time&quot;, &quot;end_time&quot;, &quot;function_type&quot;,</span>
<span class="t" style="left:893.90px;top:736.01px;font-size:7px;line-height:10px;color:#0a0a0a;letter-spacing:-0.290px;">&quot;type&quot;, &quot;sub_type&quot;, &quot;name&quot;, &quot;comment&quot;, &quot;mark&quot; FROM &quot;public&quot;.&quot;total_analytical_reports&quot;</span>
<span class="t" style="left:893.90px;top:744.01px;font-size:7px;line-height:10px;color:#0a0a0a;letter-spacing:-0.464px;">WHERE (&quot;mark&quot; &lt;&gt; 2)</span>
</div>
<div class="card" style="left:1174.5px;top:80px;width:432.5px;height:799px"></div>
<div class="r" style="left:1174.00px;top:80.00px;width:1.00px;height:799.00px;background:#e9ecef;"></div>
<span class="t" style="left:1191.80px;top:99.00px;font-size:21.5px;line-height:30px;color:#4a4f54;letter-spacing:0.635px;">Настройки</span>
<div class="r" style="left:1175.00px;top:146.00px;width:432.00px;height:33.00px;background:#e9ecef;"></div>
<span class="t" style="left:1191.80px;top:154.00px;font-size:12.5px;line-height:18px;color:#8b9299;letter-spacing:-0.152px;">Общие</span>
<span class="t" style="left:1191.80px;top:205.00px;font-size:13px;line-height:18px;color:#5a5f64;letter-spacing:0.029px;">Название</span>
<span class="t" style="left:1250.70px;top:205.00px;font-size:13px;line-height:18px;color:#e8283c;">*</span>
<span class="t" style="left:1255.90px;top:205.00px;font-size:13px;line-height:18px;color:#5a5f64;">:</span>
<div class="inp" style="left:1296px;top:195px;width:284px;height:37px"></div>
<span class="t" style="left:1308.40px;top:205.00px;font-size:13px;line-height:18px;color:#9aa0a6;letter-spacing:0.027px;">Введите имя отчета</span>
<span class="t" style="left:1191.80px;top:252.00px;font-size:13px;line-height:18px;color:#5a5f64;letter-spacing:-0.180px;">Описание:</span>
<div class="inp" style="left:1296px;top:242px;width:284px;height:37px"></div>
<span class="t" style="left:1309.10px;top:253.00px;font-size:13px;line-height:18px;color:#9aa0a6;letter-spacing:0.062px;">Введите описание отчета</span>
<svg style="left:1567.5px;top:266.500px" width="9" height="9" viewBox="0 0 9 9"><path d="M0.500 8.500l8-8M4.500 8.500l4-4" stroke="#333" stroke-width="1.1" fill="none"/></svg>
<span class="t" style="left:1191.80px;top:294.00px;font-size:13px;line-height:18px;color:#5a5f64;letter-spacing:0.105px;">Политика</span>
<span class="t" style="left:1250.70px;top:294.00px;font-size:13px;line-height:18px;color:#e8283c;">*</span>
<span class="t" style="left:1255.90px;top:294.00px;font-size:13px;line-height:18px;color:#5a5f64;">:</span>
<div class="inp" style="left:1296px;top:289px;width:139px;height:28px"></div>
<span class="t" style="left:1309.30px;top:294.00px;font-size:13px;line-height:18px;color:#33383d;letter-spacing:-0.504px;">Выбрать политику</span>
<svg style="left:1415.1px;top:300.7px" width="7.6" height="4.4" viewBox="0 0 7.600 4.400"><path d="M0.300 0h7a.3.3 0 0 1 .2.500L4 4.200a.3.3 0 0 1-.4 0L.1.500a.3.3 0 0 1 .2-.5z" fill="#33383d"/></svg>
<span class="t" style="left:1191.80px;top:332.00px;font-size:13px;line-height:18px;color:#5a5f64;letter-spacing:0.051px;">Фильтр:</span>
<div class="inp" style="left:1296px;top:327px;width:128px;height:28px"></div>
<span class="t" style="left:1309.30px;top:332.00px;font-size:13px;line-height:18px;color:#33383d;letter-spacing:-0.690px;">Выбрать фильтр</span>
<svg style="left:1404.0px;top:338.6px" width="7.6" height="4.4" viewBox="0 0 7.600 4.400"><path d="M0.300 0h7a.3.3 0 0 1 .2.500L4 4.200a.3.3 0 0 1-.4 0L.1.500a.3.3 0 0 1 .2-.5z" fill="#33383d"/></svg>
<div class="r" style="left:1175.00px;top:371.00px;width:432.00px;height:32.00px;background:#e9ecef;"></div>
<span class="t" style="left:1191.80px;top:378.01px;font-size:12.5px;line-height:18px;color:#8b9299;letter-spacing:0.247px;">Вид отчета</span>
<div class="inp" style="left:1191px;top:419px;width:388px;height:28px"></div>
<div class="r" style="left:1191px;top:419px;width:195px;height:28px;background:#f8f9fa;border:1px solid #e1e5e9;border-radius:3px 0 0 3px;box-shadow:inset 0 2px 4px rgba(0,0,0,.07)"></div>
<svg style="left:1249.1px;top:427.500px" width="12.4" height="10.4" viewBox="0 0 12.400 10.400"><path d="M0 0h2.300v2.200h-2.300zM0 4.100h2.300v2.200h-2.300zM0 8.200h2.300v2.200h-2.300zM3.800 0.200h8.600v1.900h-8.600zM3.800 4.250h8.600v1.900h-8.600zM3.800 8.300h8.600v1.900h-8.600z" fill="#33383d"/></svg>
<span class="t" style="left:1265.00px;top:424.00px;font-size:13px;line-height:18px;color:#33383d;letter-spacing:-0.670px;">Табличный</span>
<svg style="left:1437.3px;top:427.900px" width="12.3" height="9.5" viewBox="0 0 12.3 9.500"><path d="M0.500 0v8.900h11.800" stroke="#33383d" stroke-width="1" fill="none"/><path d="M2.600 4.500h1.300v3.300h-1.300zM4.900 1.500h1.300v6.300h-1.300zM7.200 3.300h1.300v4.500h-1.300zM9.500 1.500h1.300v6.300h-1.300z" fill="#33383d"/></svg>
<span class="t" style="left:1452.80px;top:424.00px;font-size:13px;line-height:18px;color:#33383d;letter-spacing:-0.665px;">Графический</span>
<div class="inp" style="left:1191px;top:457px;width:115px;height:28px"></div>
<span class="t" style="left:1204.20px;top:462.00px;font-size:13px;line-height:18px;color:#33383d;letter-spacing:-0.609px;">Выбрать поля</span>
<svg style="left:1285.5px;top:468.6px" width="7.6" height="4.4" viewBox="0 0 7.600 4.400"><path d="M0.300 0h7a.3.3 0 0 1 .2.500L4 4.200a.3.3 0 0 1-.4 0L.1.500a.3.3 0 0 1 .2-.5z" fill="#33383d"/></svg>
<div class="inp" style="left:1322px;top:457px;width:95px;height:28px"></div>
<div class="r" style="left:1369px;top:457px;width:48px;height:28px;background:#f5f6f8;border:1px solid #e1e5e9;border-radius:0 3px 3px 0;box-shadow:inset 0 2px 4px rgba(0,0,0,.07)"></div>
<span class="t" style="left:1334.80px;top:462.00px;font-size:13px;line-height:18px;color:#33383d;letter-spacing:-1.500px;">CSV</span>
<span class="t" style="left:1382.30px;top:462.00px;font-size:13px;line-height:18px;color:#33383d;letter-spacing:-1.500px;">PDF</span>
<div class="tag" style="left:1191.0px;top:495.0px;width:71.0px;height:24px"></div>
<span class="t" style="left:1209.30px;top:498.00px;font-size:13px;line-height:18px;color:#f5a45e;letter-spacing:-0.952px;">Время</span>
<svg style="left:1198.7px;top:501.300px" width="6.4" height="10.4" viewBox="0 0 6.400 10.400"><path d="M3.200 0L6.400 3.900h-2.050v6.500h-2.300v-6.500h-2.050z" fill="#f5a45e"/></svg>
<div class="tag" style="left:1268.0px;top:495.0px;width:79.0px;height:24px"></div>
<span class="t" style="left:1286.50px;top:498.00px;font-size:13px;line-height:18px;color:#f5a45e;letter-spacing:-0.616px;">Имя БД</span>
<div class="tag" style="left:1353.0px;top:495.0px;width:94.0px;height:24px"></div>
<span class="t" style="left:1371.00px;top:498.00px;font-size:13px;line-height:18px;color:#f5a45e;letter-spacing:-0.698px;">IP сервера</span>
<div class="tag" style="left:1453.0px;top:495.0px;width:107.0px;height:24px"></div>
<span class="t" style="left:1471.40px;top:498.00px;font-size:13px;line-height:18px;color:#f5a45e;letter-spacing:-0.583px;">Приложение</span>
<div class="tag" style="left:1191.0px;top:525.0px;width:102.0px;height:24px"></div>
<span class="t" style="left:1209.00px;top:528.00px;font-size:13px;line-height:18px;color:#f5a45e;letter-spacing:-0.634px;">URL\Запрос</span>
<div class="r" style="left:1191px;top:557.8px;width:34px;height:20px;border-radius:10px;background:#ccc;border:1px solid #a0a0a0"></div>
<div class="r" style="left:1191px;top:557.8px;width:20px;height:20px;border-radius:10px;background:#e9ecef;border:1px solid #a0a0a0"></div>
<span class="t" style="left:1230.60px;top:559.01px;font-size:13px;line-height:18px;color:#1f2327;letter-spacing:0.144px;">Агрегировать по полям</span>
<svg style="left:1379px;top:560.300px" width="14" height="14" viewBox="0 0 14 14"><circle cx="7" cy="7" r="7" fill="#d3d8dd"/></svg>
<span class="t" style="left:1382.63px;top:560.00px;font-size:11px;line-height:15px;color:#fff;font-weight:700;">?</span>
<div class="r" style="left:1175.00px;top:595.00px;width:432.00px;height:32.00px;background:#e9ecef;"></div>
<span class="t" style="left:1191.80px;top:602.00px;font-size:12.5px;line-height:18px;color:#8b9299;letter-spacing:0.353px;">Расписание</span>
<div class="r" style="left:1191px;top:647.9px;width:34px;height:20px;border-radius:10px;background:#0d8ddb;border:1px solid #8a9096"></div>
<div class="r" style="left:1205px;top:647.9px;width:20px;height:20px;border-radius:10px;background:#e9ecef;border:1px solid #8a9096"></div>
<span class="t" style="left:1233.40px;top:648.00px;font-size:13px;line-height:18px;color:#5a5f64;letter-spacing:0.194px;">Выгружать по расписанию</span>
<div class="inp" style="left:1405px;top:643px;width:37px;height:28px"></div>
<svg style="left:1418.3px;top:650.300px" width="10.8" height="12.8" viewBox="0 0 10.800 12.800"><path d="M0.600 1.600h9.600a.6.6 0 0 1 .6.600v10a.6.6 0 0 1-.6.600h-9.600a.6.6 0 0 1-.6-.6v-10a.6.6 0 0 1 .6-.6z" fill="#33383d"/><path d="M2.100 0h1.700v2.600h-1.700zM7 0h1.700v2.600h-1.700z" fill="#33383d"/><path d="M0 4.300h10.800v.8h-10.800z" fill="#fff"/><path d="M1.300 6.100h2.100v1.500h-2.100zM4.350 6.100h2.100v1.500h-2.100zM7.400 6.100h2.100v1.500h-2.100zM1.300 8.500h2.100v1.500h-2.100zM4.350 8.500h2.100v1.500h-2.100zM7.400 8.500h2.100v1.500h-2.100zM1.300 10.800h2.100v1.100h-2.100zM4.350 10.800h2.100v1.100h-2.100zM7.400 10.800h2.100v1.100h-2.100z" fill="#fff" fill-opacity=".85"/></svg>
<span class="t" style="left:1231.50px;top:680.00px;font-size:13px;line-height:18px;color:#bfc3c8;letter-spacing:0.120px;">Каждый день в 00:30</span>
<div class="r" style="left:1175.00px;top:715.00px;width:432.00px;height:32.00px;background:#e9ecef;"></div>
<span class="t" style="left:1191.80px;top:722.01px;font-size:12.5px;line-height:18px;color:#8b9299;letter-spacing:0.227px;">Оповещения</span>
<div class="r" style="left:1191px;top:767.8px;width:34px;height:20px;border-radius:10px;background:#0d8ddb;border:1px solid #8a9096"></div>
<div class="r" style="left:1205px;top:767.8px;width:20px;height:20px;border-radius:10px;background:#e9ecef;border:1px solid #8a9096"></div>
<span class="t" style="left:1233.40px;top:768.00px;font-size:13px;line-height:18px;color:#5a5f64;letter-spacing:0.038px;">Отправлять отчеты на Email</span>
<span class="t" style="left:1191.80px;top:808.00px;font-size:13px;line-height:18px;color:#5a5f64;letter-spacing:0.002px;">Тема письма:</span>
<div class="inp" style="left:1321px;top:799px;width:259px;height:37px"></div>
<span class="t" style="left:1333.30px;top:809.00px;font-size:13px;line-height:18px;color:#555a5f;letter-spacing:-0.039px;">введите тему</span>
<span class="t" style="left:1191.80px;top:857.01px;font-size:13px;line-height:18px;color:#5a5f64;letter-spacing:0.036px;">Список адресов</span>
<span class="t" style="left:1289.80px;top:857.01px;font-size:13px;line-height:18px;color:#e8283c;">*</span>
<span class="t" style="left:1295.00px;top:857.01px;font-size:13px;line-height:18px;color:#5a5f64;">:</span>
<div class="inp" style="left:1321px;top:848px;width:259px;height:30px;border-color:#1a8ad6;border-radius:4px"></div>
<svg style="left:1409.8px;top:855.900px" width="12.4" height="12.4" viewBox="-6.200 -6.200 12.400 12.400"><g fill="#1a8ad6"><circle r="4.600"/><rect x="-1.700" y="-6.200" width="3.400" height="12.400" rx="0.800" transform="rotate(0)"/><rect x="-1.700" y="-6.200" width="3.400" height="12.400" rx="0.800" transform="rotate(60)"/><rect x="-1.700" y="-6.200" width="3.400" height="12.400" rx="0.800" transform="rotate(120)"/></g><circle r="2.100" fill="#fff"/></svg>
<span class="t" style="left:1427.00px;top:854.00px;font-size:13px;line-height:18px;color:#1a8ad6;letter-spacing:0.071px;">Настроить</span>
</body></html>
